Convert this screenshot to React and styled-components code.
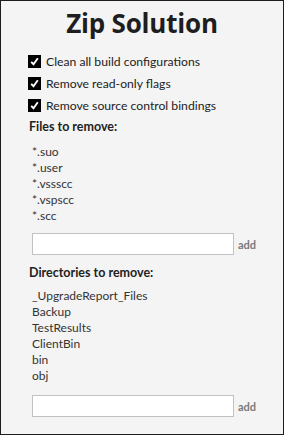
import React from "react";
import styled, { createGlobalStyle } from "styled-components";

const Global = createGlobalStyle`
  html, body { margin: 0; padding: 0; background: #ffffff; }
  * { box-sizing: border-box; }
`;

const Frame = styled.div`
  width: 284px;
  height: 435px;
  border: 1px solid #1c1c1c;
  background: #f4f4f4;
  font-family: Lato, "Open Sans", sans-serif;
  color: #222;
  padding: 4px 0 0 0;
`;

const Title = styled.h1`
  margin: 0;
  text-align: center;
  font-family: "Open Sans", sans-serif;
  font-size: 26px;
  line-height: 36px;
  font-weight: 700;
  color: #1e1e1e;
  letter-spacing: -0.2px;
`;

const Options = styled.div`
  display: flex;
  flex-direction: column;
  padding-left: 27px;
  margin-top: 9px;
`;

const OptionRow = styled.label`
  display: flex;
  align-items: center;
  gap: 5px;
  height: 22px;
  font-size: 12.2px;
  color: #222;
`;

const Box = styled.span`
  width: 13px;
  height: 13px;
  background: #000;
  display: flex;
  align-items: center;
  justify-content: center;
  flex: none;
`;

const Section = styled.div`
  padding-left: 28px;
  margin-top: ${(p) => p.$top}px;
`;

const Heading = styled.div`
  font-size: 12.5px;
  font-weight: 700;
  line-height: 22px;
  color: #222;
  margin-top: ${(p) => p.$top || 0}px;
`;

const List = styled.ul`
  list-style: none;
  margin: ${(p) => p.$top}px 0 0 0;
  padding: 0 0 0 3px;
`;

const Item = styled.li`
  font-size: 12px;
  line-height: 16px;
  color: #333;
`;

const AddRow = styled.div`
  display: flex;
  align-items: center;
  gap: 4px;
  margin-top: ${(p) => p.$top}px;
  padding-left: 3px;
`;

const Field = styled.input`
  width: 202px;
  height: 22px;
  border: 1px solid #c2c2c2;
  background: #fff;
  padding: 0 4px;
  margin: 0;
  outline: none;
`;

const AddLink = styled.span`
  font-size: 11px;
  font-weight: 700;
  color: #7a7a7a;
`;

const Check = () => (
  <Box>
    <svg width="9" height="9" viewBox="0 0 9 9">
      <path d="M1.2 4.8 L3.5 7.2 L7.8 1.3" stroke="#fff" strokeWidth="1.9" fill="none" />
    </svg>
  </Box>
);

const files = ["*.suo", "*.user", "*.vssscc", "*.vspscc", "*.scc"];
const dirs = ["_UpgradeReport_Files", "Backup", "TestResults", "ClientBin", "bin", "obj"];
const options = [
  "Clean all build configurations",
  "Remove read-only flags",
  "Remove source control bindings",
];

export default function App() {
  return (
    <>
      <Global />
      <Frame>
        <Title>Zip Solution</Title>
        <Options>
          {options.map((o) => (
            <OptionRow key={o}>
              <Check />
              {o}
            </OptionRow>
          ))}
        </Options>
        <Section $top={0}>
          <Heading>Files to remove:</Heading>
          <List $top={6}>
            {files.map((f) => (
              <Item key={f}>{f}</Item>
            ))}
          </List>
          <AddRow $top={9}>
            <Field type="text" />
            <AddLink>add</AddLink>
          </AddRow>
          <Heading $top={7}>Directories to remove:</Heading>
          <List $top={4}>
            {dirs.map((d) => (
              <Item key={d}>{d}</Item>
            ))}
          </List>
          <AddRow $top={11}>
            <Field type="text" />
            <AddLink>add</AddLink>
          </AddRow>
        </Section>
      </Frame>
    </>
  );
}
